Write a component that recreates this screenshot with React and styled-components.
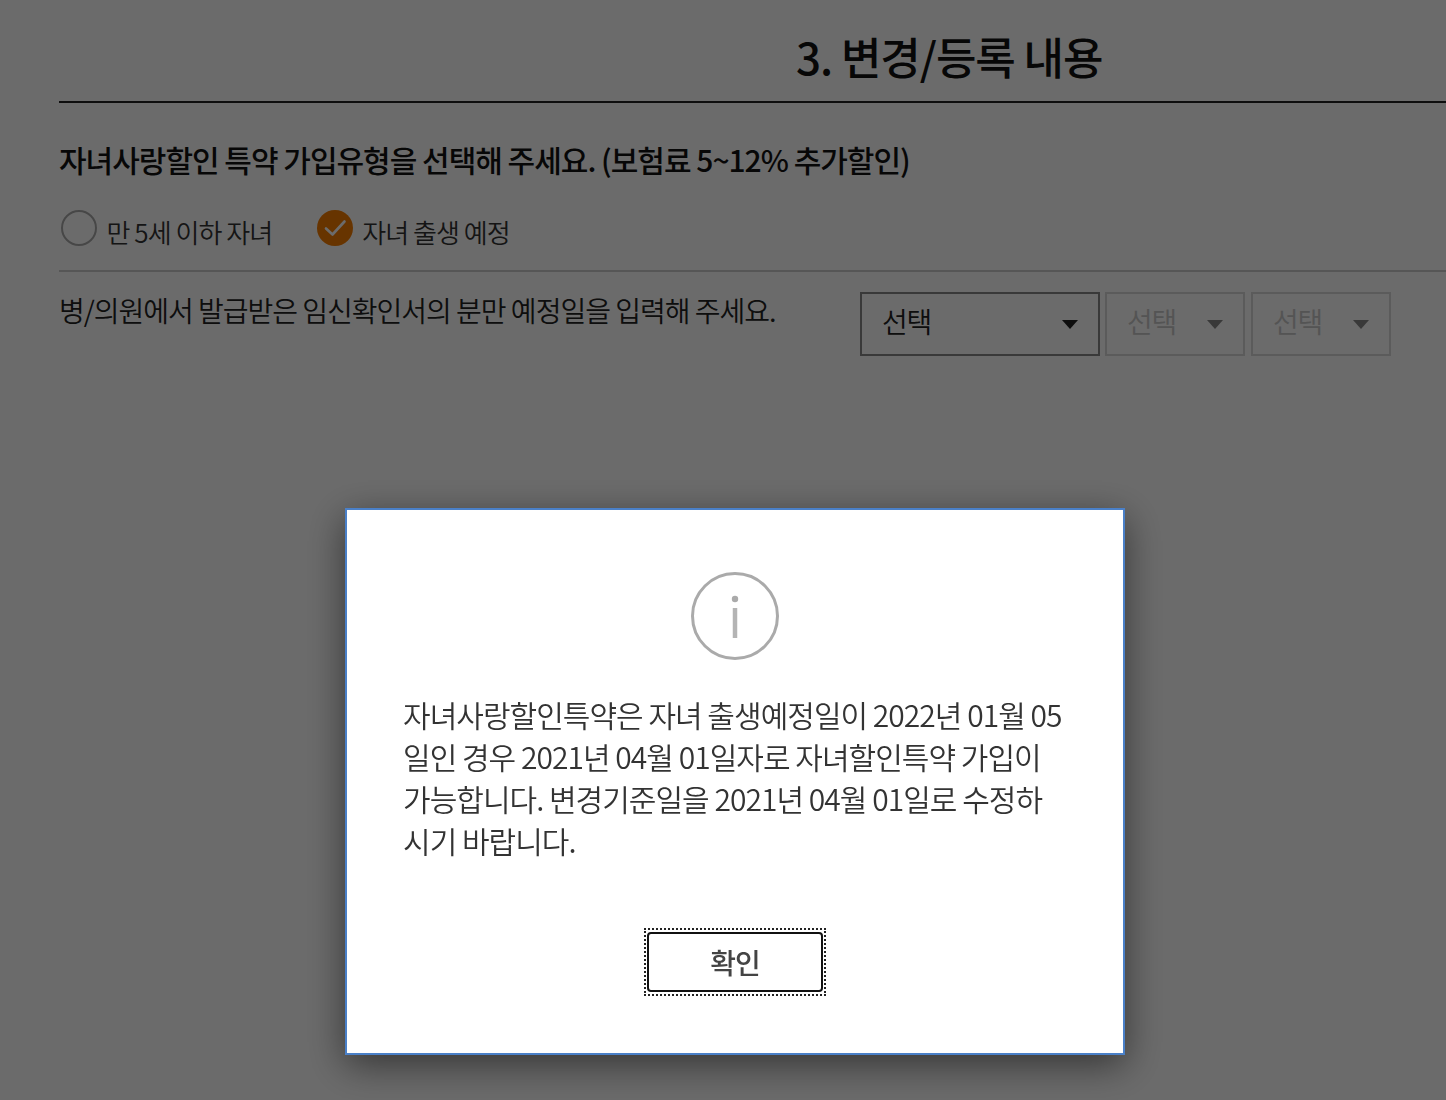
import React from "react";
import styled, { createGlobalStyle } from "styled-components";

const Global = createGlobalStyle`
  html, body { margin: 0; padding: 0; background: #fff; overflow: hidden; }
  body { font-family: "Noto Sans CJK KR", "Noto Sans", sans-serif; color: #222; }
  #root { height: 1100px; overflow: hidden; }
`;

const Page = styled.div`
  width: 1446px;
  height: 1100px;
  padding-left: 59px;
  box-sizing: border-box;
  overflow: hidden;
`;

const Heading = styled.h2`
  margin: 0;
  height: 103px;
  box-sizing: border-box;
  padding: 25px 0 0 737px;
  border-bottom: 2px solid #222;
  font-size: 44px;
  line-height: 62px;
  font-weight: 500;
  letter-spacing: -1.05px;
  color: #111;
  white-space: nowrap;
`;

const Question = styled.h3`
  margin: 0;
  padding-top: 34px;
  font-size: 30px;
  line-height: 44px;
  font-weight: 500;
  letter-spacing: -1px;
  color: #111;
  white-space: nowrap;
`;

const Options = styled.div`
  display: flex;
  align-items: center;
  height: 91px;
  padding: 15px 0 11px 2px;
  box-sizing: border-box;
  border-bottom: 2px solid #ccc;
`;

const Option = styled.label`
  display: flex;
  align-items: center;
  gap: 9.5px;
  margin-right: 44.5px;
  font-size: 26px;
  font-weight: 350;
  letter-spacing: -0.95px;
  color: #333;
  white-space: nowrap;
`;

const OptionText = styled.span`
  padding-top: 8px;
`;

const Radio = styled.span`
  width: 36px;
  height: 36px;
  box-sizing: border-box;
  border-radius: 50%;
  border: ${(p) => (p.$checked ? "none" : "2px solid #aaa")};
  background: ${(p) => (p.$checked ? "#f57c00" : "#fff")};
  display: flex;
  align-items: center;
  justify-content: center;
`;

const DateRow = styled.div`
  display: flex;
  align-items: flex-start;
  padding-top: 20px;
`;

const DateLabel = styled.div`
  width: 801px;
  flex: none;
  font-size: 28px;
  line-height: 36px;
  font-weight: 350;
  letter-spacing: -1px;
  color: #222;
  white-space: nowrap;
`;

const Selects = styled.div`
  display: flex;
  gap: 5px;
`;

const Select = styled.div`
  width: ${(p) => p.$w}px;
  height: 64px;
  margin-left: ${(p) => p.$offset || 0}px;
  box-sizing: border-box;
  border: 2px solid ${(p) => (p.$disabled ? "#d8d8d8" : "#888")};
  display: flex;
  align-items: center;
  justify-content: space-between;
  padding: 0 20px 6px 20px;
  font-size: 28px;
  font-weight: 350;
  letter-spacing: -1.3px;
  color: ${(p) => (p.$disabled ? "#c8c8c8" : "#222")};
`;

const Caret = styled.span`
  width: 0;
  height: 0;
  margin-top: 6px;
  border-left: 8px solid transparent;
  border-right: 8px solid transparent;
  border-top: 9px solid ${(p) => (p.$disabled ? "#888" : "#222")};
`;

const Overlay = styled.div`
  position: fixed;
  inset: 0;
  background: rgba(0, 0, 0, 0.58);
`;

const Modal = styled.div`
  position: absolute;
  left: 345px;
  top: 508px;
  width: 780px;
  height: 547px;
  box-sizing: border-box;
  background: #fff;
  border: 2px solid #4a80c8;
  box-shadow: 0 10px 36px rgba(0, 0, 0, 0.5);
  padding: 62px 56px 0;
  display: flex;
  flex-direction: column;
  align-items: center;
`;

const Message = styled.p`
  margin: 33px 0 0;
  width: 100%;
  font-size: 30px;
  line-height: 42px;
  font-weight: 350;
  letter-spacing: -0.97px;
  color: #333;
  white-space: nowrap;
`;

const ButtonFrame = styled.div`
  margin-top: 67px;
  padding: 2px 1px;
  border: 2px dotted #222;
`;

const ConfirmButton = styled.button`
  display: block;
  width: 176px;
  height: 60px;
  padding: 0;
  background: #fff;
  border: 2.5px solid #111;
  border-radius: 4px;
  font-family: inherit;
  font-size: 28px;
  font-weight: 500;
  letter-spacing: -0.9px;
  color: #444;
`;

const Check = () => (
  <svg width="24" height="20" viewBox="0 0 24 20" fill="none">
    <path d="M3 10.5 L9.5 16.5 L21.5 3.5" stroke="#fff" strokeWidth="2.6" strokeLinecap="round" strokeLinejoin="round" />
  </svg>
);

const InfoIcon = () => (
  <svg width="88" height="88" viewBox="0 0 88 88" fill="none">
    <circle cx="44" cy="44" r="42.5" stroke="#aaa" strokeWidth="3" />
    <circle cx="44" cy="27" r="3.2" fill="#aaa" />
    <path d="M44 36 V66" stroke="#b4b4b4" strokeWidth="4.5" />
  </svg>
);

export default function App() {
  return (
    <>
      <Global />
      <Page>
        <Heading>3. 변경/등록 내용</Heading>
        <Question>자녀사랑할인 특약 가입유형을 선택해 주세요. (보험료 5~12% 추가할인)</Question>
        <Options>
          <Option>
            <Radio />
            <OptionText>만 5세 이하 자녀</OptionText>
          </Option>
          <Option>
            <Radio $checked>
              <Check />
            </Radio>
            <OptionText>자녀 출생 예정</OptionText>
          </Option>
        </Options>
        <DateRow>
          <DateLabel>병/의원에서 발급받은 임신확인서의 분만 예정일을 입력해 주세요.</DateLabel>
          <Selects>
            <Select $w={240}>
              선택
              <Caret />
            </Select>
            <Select $w={140} $disabled>
              선택
              <Caret $disabled />
            </Select>
            <Select $w={140} $offset={1} $disabled>
              선택
              <Caret $disabled />
            </Select>
          </Selects>
        </DateRow>
      </Page>
      <Overlay>
        <Modal>
          <InfoIcon />
          <Message>
            자녀사랑할인특약은 자녀 출생예정일이 2022년 01월 05
            <br />
            일인 경우 2021년 04월 01일자로 자녀할인특약 가입이
            <br />
            가능합니다. 변경기준일을 2021년 04월 01일로 수정하
            <br />
            시기 바랍니다.
          </Message>
          <ButtonFrame>
            <ConfirmButton>확인</ConfirmButton>
          </ButtonFrame>
        </Modal>
      </Overlay>
    </>
  );
}
